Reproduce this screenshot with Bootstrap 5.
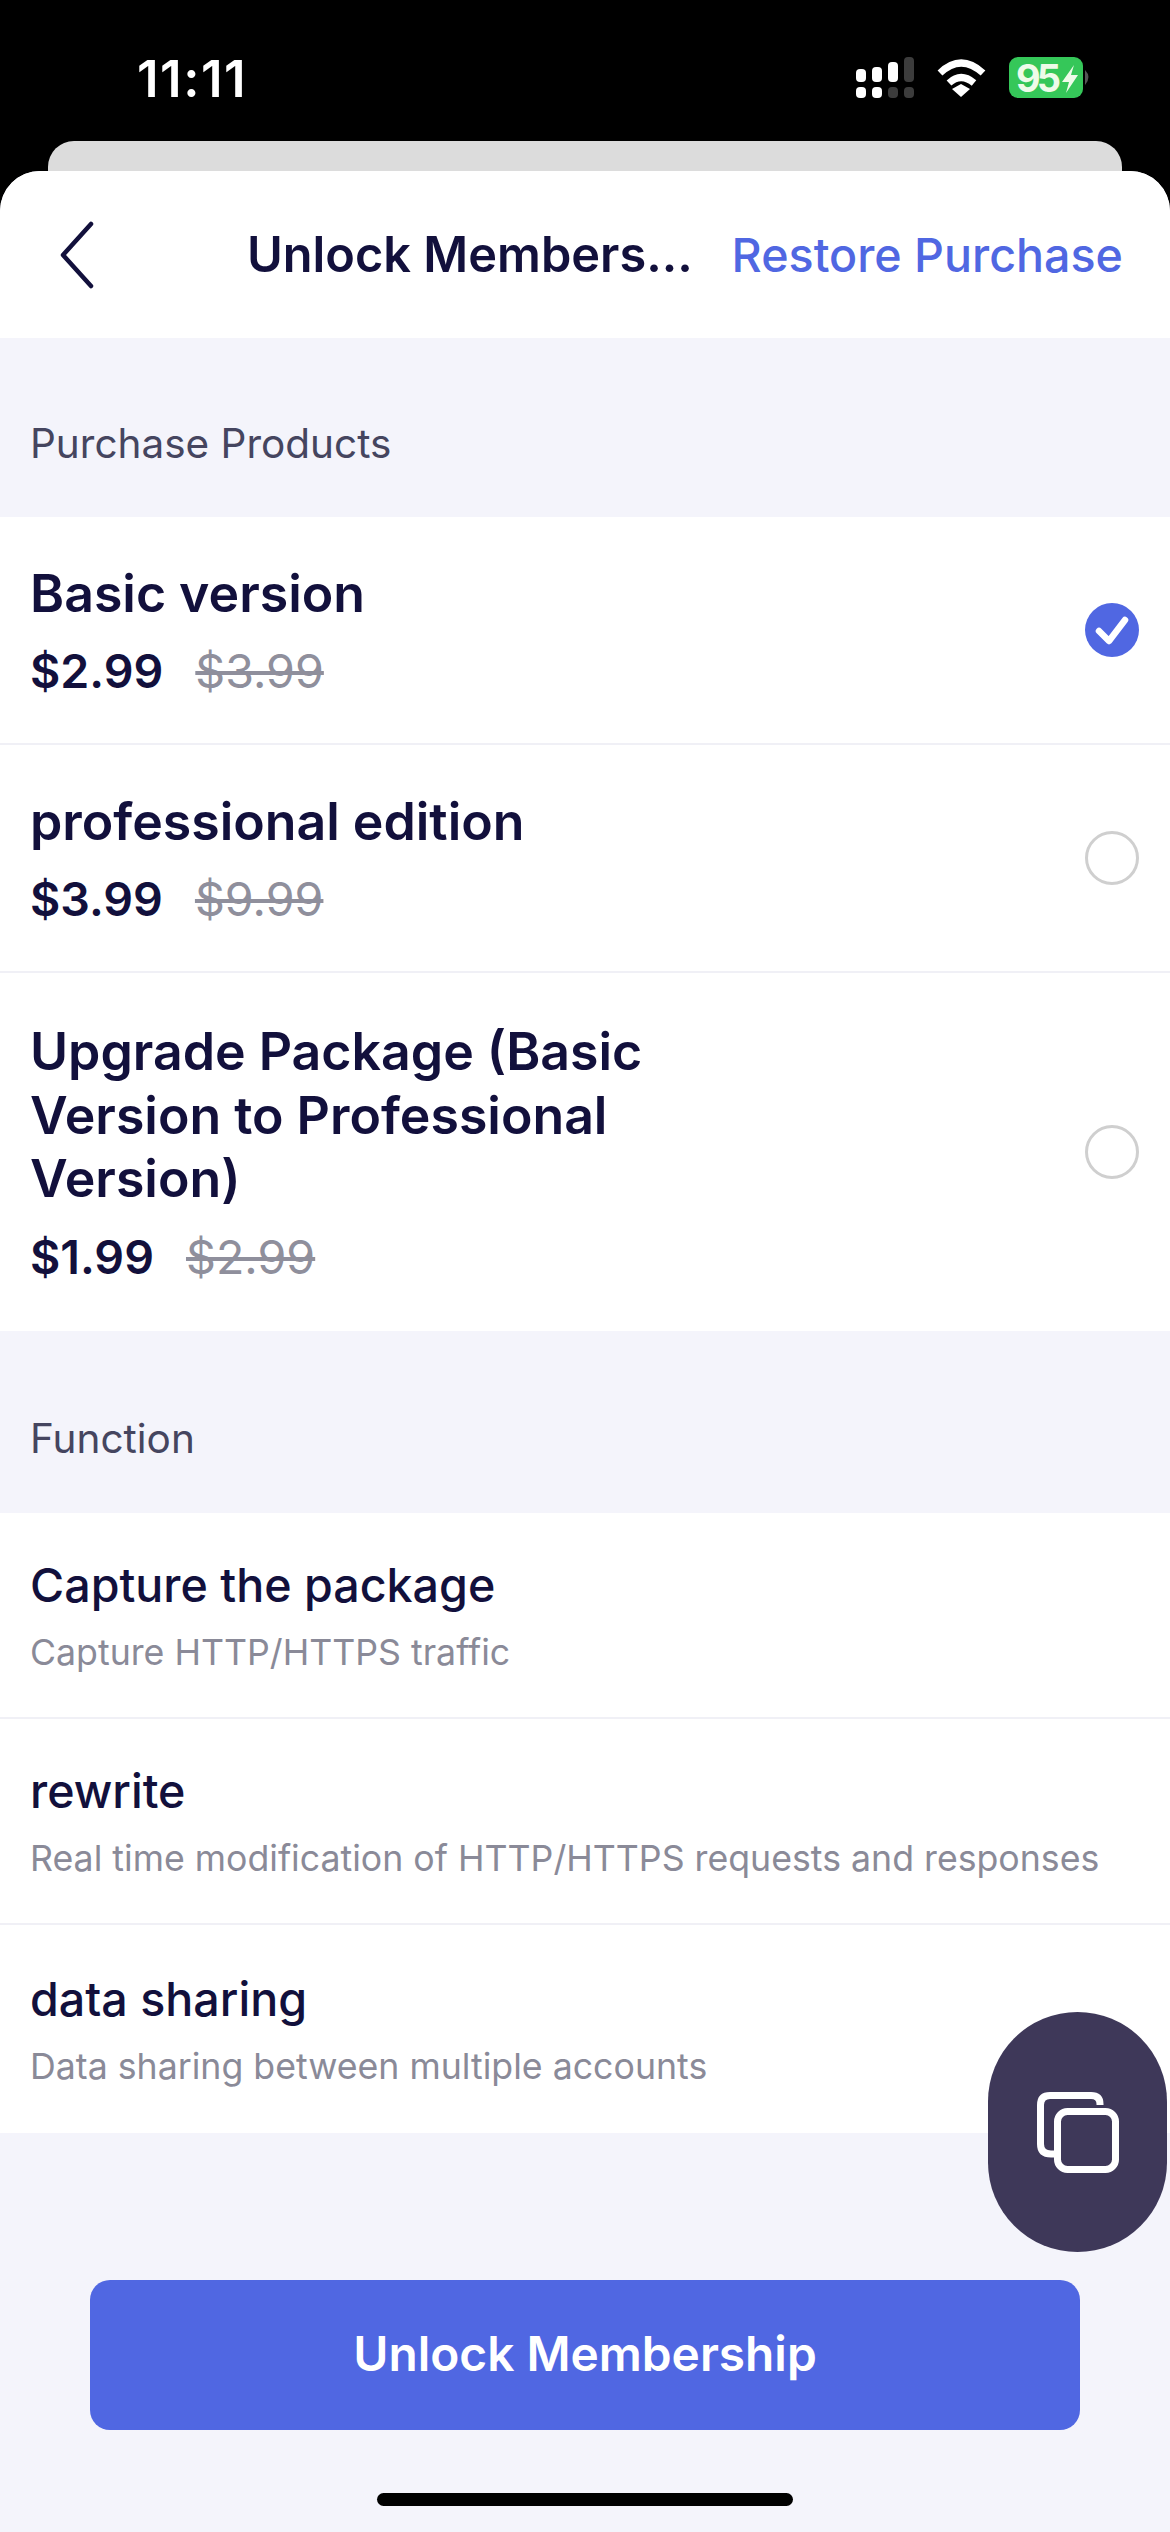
<!DOCTYPE html>
<html lang="en">
<head>
<meta charset="utf-8">
<title>Unlock Membership</title>
<link href="https://cdn.jsdelivr.net/npm/bootstrap@5.3.0/dist/css/bootstrap.min.css" rel="stylesheet">
<style>
html,body{margin:0;background:#000;}
body{width:1170px;height:2532px;overflow:hidden;font-family:"Inter","Liberation Sans",sans-serif;color:#12103c;}
.shell{width:1170px;height:2532px;}
.statusrow{height:141px;padding:15px 74px 0 137px;}
.clock{font-size:51px;font-weight:600;color:#fff;letter-spacing:1.5px;line-height:1;}
.peek{height:30px;margin:0 48px;background:#dcdcdc;border-radius:26px 26px 0 0;}
.sheet{height:2361px;background:#f4f4fb;border-radius:40px 40px 0 0;overflow:hidden;}
.topbar{height:167px;background:#fff;padding:0 47px 0 60px;flex-wrap:nowrap;}
.topbar svg{display:block;}
.bar-title{margin-left:153px;font-size:48.7px;font-weight:600;color:#12103c;white-space:nowrap;line-height:1;padding-top:2px;}
.restore{font-size:46.6px;font-weight:500;color:#5067e2;white-space:nowrap;line-height:1;padding:2px 0 0;text-decoration:none;margin-left:auto;}
.section-label{height:179px;padding:0 30px 53px;font-size:40.5px;color:#45455f;line-height:1;}
.section-label.second{height:182px;padding-bottom:54px;}
.rows{border-radius:0;--bs-list-group-border-color:#f0f0f6;--bs-list-group-bg:#fff;}
.rows .list-group-item{padding:0 31px 0 30px;color:#12103c;border-width:0 0 2px;border-color:#f0f0f6;}
.prod{height:228px;}
.prod.tall{height:358px;}
.prod-info{padding-bottom:3px;}
.prod-name{font-size:51.8px;font-weight:600;line-height:63.500px;max-width:700px;}
.price-line{font-size:46.6px;font-weight:600;line-height:1;margin-top:23px;gap:32px;}
.old{color:#8f8f9c;font-weight:400;text-decoration:line-through;}
.tick{width:54px;height:54px;flex:none;}
.feat{height:206px;padding-top:3px !important;}
.feat.last{height:208px;}
.feat-name{font-size:46.6px;font-weight:500;line-height:1;}
.feat-desc{font-size:35.7px;color:#8a8a98;line-height:1;margin-top:27px;white-space:nowrap;}
.foot{flex:1;}
.cta{width:990px;height:150px;margin:147px 0 0 90px;background:#5067e2;border:0;border-radius:20px;font-size:47.8px;font-weight:600;color:#fff;display:block;}
.homebar{width:416px;height:13px;border-radius:7px;background:#000;margin:63px auto 0;}
.fab{position:absolute;left:988px;top:2012px;width:179px;height:240px;border-radius:90px;background:#3e3859;}
</style>
</head>
<body>
<div class="shell position-relative d-flex flex-column">
  <div class="statusrow d-flex align-items-center justify-content-between">
    <span class="clock">11:11</span>
    <svg width="240" height="44" viewBox="0 0 240 44" aria-hidden="true">
      <g fill="#fff">
        <rect x="0" y="13" width="10" height="13" rx="4"/><rect x="16" y="11" width="10" height="15" rx="4"/><rect x="32" y="6" width="10" height="20" rx="4"/>
        <rect x="0" y="31" width="10" height="11" rx="4"/><rect x="16" y="31" width="10" height="11" rx="4"/>
      </g>
      <g fill="#3c3c3c">
        <rect x="48" y="1" width="10" height="25" rx="4"/><rect x="32" y="31" width="10" height="11" rx="4"/><rect x="48" y="31" width="10" height="11" rx="4"/>
      </g>
      <g fill="none" stroke="#fff" stroke-width="7">
        <path d="M84 17 Q105 -3 127 17"/><path d="M93 27 Q105 16 118 27"/>
      </g>
      <path d="M96 33 L105 28 L114 33 L105 41 Z" fill="#fff"/>
      <rect x="153" y="1" width="74" height="41" rx="9" fill="#35c759"/>
      <text x="160" y="36" font-family="Inter" font-size="38" font-weight="700" letter-spacing="-4" fill="#eefbe9">95</text>
      <path d="M218 9 L206 26 H213 L210 37 L222 19 H215 Z" fill="#eefbe9"/>
      <path d="M229 14 Q236 21 229 29 Z" fill="#555"/>
    </svg>
  </div>
  <div class="peek"></div>
  <div class="sheet d-flex flex-column">
    <nav class="navbar topbar d-flex align-items-center">
      <svg width="34" height="68" viewBox="0 0 34 68" aria-hidden="true"><path d="M31 3 L3 34 L31 65" fill="none" stroke="#12103c" stroke-width="4.5" stroke-linecap="round" stroke-linejoin="round"/></svg>
      <span class="bar-title">Unlock Members...</span>
      <a class="restore" href="#">Restore Purchase</a>
    </nav>
    <div class="section-label d-flex align-items-end">Purchase Products</div>
    <div class="list-group list-group-flush rows">
      <div class="list-group-item prod d-flex align-items-center justify-content-between">
        <div class="prod-info"><div class="prod-name">Basic version</div><div class="price-line d-flex"><span>$2.99</span><span class="old">$3.99</span></div></div>
        <svg class="tick" viewBox="0 0 54 54" aria-hidden="true"><circle cx="27" cy="27" r="27" fill="#5067e2"/><path d="M14 28 L24 38 L40 17" fill="none" stroke="#fff" stroke-width="6.5" stroke-linecap="round" stroke-linejoin="round"/></svg>
      </div>
      <div class="list-group-item prod d-flex align-items-center justify-content-between">
        <div class="prod-info"><div class="prod-name">professional edition</div><div class="price-line d-flex"><span>$3.99</span><span class="old">$9.99</span></div></div>
        <svg class="tick" viewBox="0 0 54 54" aria-hidden="true"><circle cx="27" cy="27" r="25.5" fill="#fff" stroke="#cfcfcf" stroke-width="3"/></svg>
      </div>
      <div class="list-group-item prod tall d-flex align-items-center justify-content-between">
        <div class="prod-info"><div class="prod-name">Upgrade Package (Basic Version to Professional Version)</div><div class="price-line d-flex"><span>$1.99</span><span class="old">$2.99</span></div></div>
        <svg class="tick" viewBox="0 0 54 54" aria-hidden="true"><circle cx="27" cy="27" r="25.5" fill="#fff" stroke="#cfcfcf" stroke-width="3"/></svg>
      </div>
    </div>
    <div class="section-label second d-flex align-items-end">Function</div>
    <div class="list-group list-group-flush rows">
      <div class="list-group-item feat d-flex flex-column justify-content-center"><div class="feat-name">Capture the package</div><div class="feat-desc">Capture HTTP/HTTPS traffic</div></div>
      <div class="list-group-item feat d-flex flex-column justify-content-center"><div class="feat-name">rewrite</div><div class="feat-desc">Real time modification of HTTP/HTTPS requests and responses</div></div>
      <div class="list-group-item feat last d-flex flex-column justify-content-center"><div class="feat-name">data sharing</div><div class="feat-desc">Data sharing between multiple accounts</div></div>
    </div>
    <div class="foot">
      <button type="button" class="btn cta">Unlock Membership</button>
      <div class="homebar"></div>
    </div>
  </div>
  <div class="fab d-flex align-items-center justify-content-center">
    <svg width="82" height="81" viewBox="0 0 82 81" aria-hidden="true" fill="none" stroke="#fff" stroke-width="7">
      <path d="M63 13 V12 Q63 3.500 54 3.500 H13 Q3.500 3.500 3.500 13 V52 Q3.500 62 14 62 H18"/>
      <rect x="20.500" y="19.500" width="58" height="58" rx="10"/>
    </svg>
  </div>
</div>
<script src="https://cdn.jsdelivr.net/npm/bootstrap@5.3.0/dist/js/bootstrap.bundle.min.js"></script>
</body>
</html>
